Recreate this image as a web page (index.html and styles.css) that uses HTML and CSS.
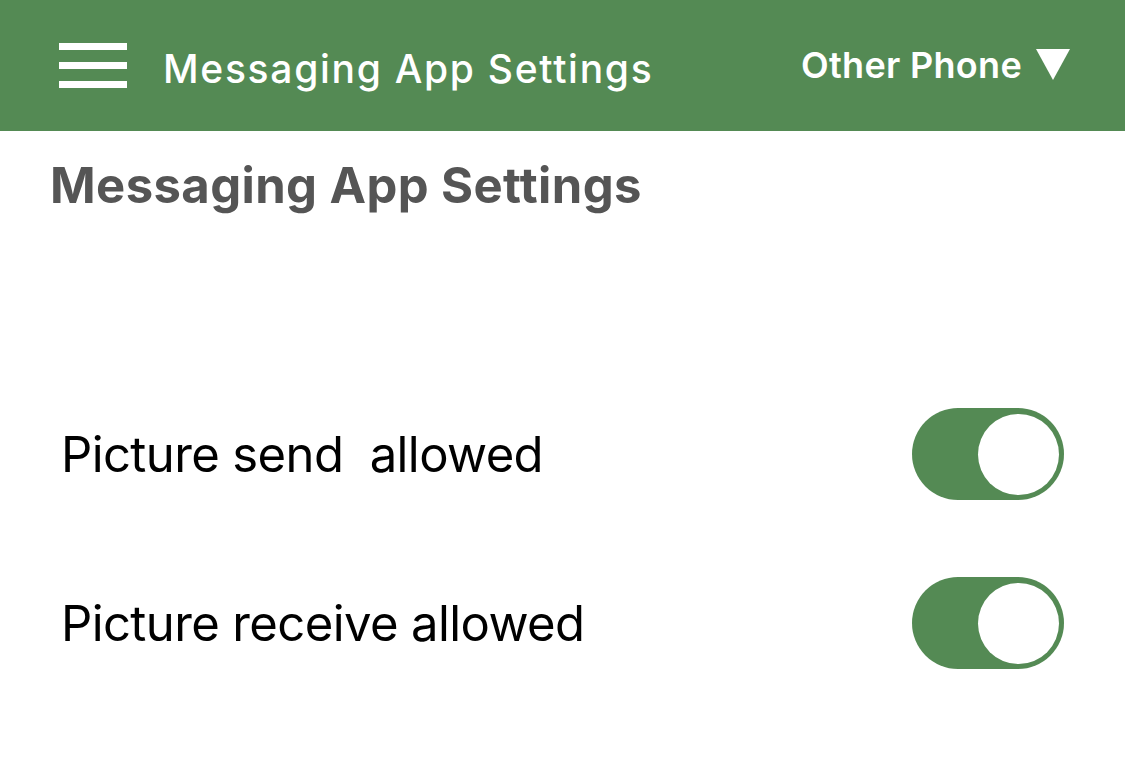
FILE: index.html
```html
<!DOCTYPE html>
<html>
<head>
<meta charset="utf-8">
<link rel="stylesheet" href="styles.css">
</head>
<body>
<header class="topbar">
  <div class="menu" aria-label="menu">
    <span class="bar"></span><span class="bar"></span><span class="bar"></span>
  </div>
  <div class="title">Messaging App Settings</div>
  <div class="picker">Other Phone <span class="tri"></span></div>
</header>
<main class="content">
  <h1 class="heading">Messaging App Settings</h1>
  <div class="list">
    <div class="row">
      <span class="label">Picture send&nbsp; allowed</span>
      <span class="toggle"><span class="knob"></span></span>
    </div>
    <div class="row">
      <span class="label">Picture receive allowed</span>
      <span class="toggle"><span class="knob"></span></span>
    </div>
  </div>
</main>
</body>
</html>
```
FILE: styles.css
```css
html, body {
  margin: 0;
  padding: 0;
  background: #ffffff;
  font-family: Inter, "Open Sans", "Liberation Sans", sans-serif;
}
.topbar {
  height: 131px;
  background: #548a54;
  display: flex;
  align-items: center;
  padding: 0 55px 0 59px;
  box-sizing: border-box;
  color: #ffffff;
}
.menu {
  width: 68px;
  display: flex;
  flex-direction: column;
  gap: 12px;
}
.bar {
  display: block;
  height: 7px;
  background: #ffffff;
}
.title {
  margin-left: 36px;
  font-size: 39px;
  font-weight: 500;
  letter-spacing: 1.7px;
  margin-top: 5px;
}
.picker {
  margin-left: auto;
  font-size: 36px;
  font-weight: 600;
  letter-spacing: 0.3px;
  display: flex;
  align-items: center;
  gap: 14px;
  margin-top: -2px;
}
.tri {
  width: 0;
  height: 0;
  border-left: 17.5px solid transparent;
  border-right: 17.5px solid transparent;
  border-top: 31px solid #ffffff;
}
.content {
  padding: 0 61px 0 50px;
}
.heading {
  margin: 25px 0 0 0;
  font-size: 49px;
  font-weight: 700;
  letter-spacing: 0.4px;
  color: #555555;
  line-height: 60px;
}
.list {
  margin-top: 192px;
  display: flex;
  flex-direction: column;
  gap: 77px;
}
.row {
  display: flex;
  align-items: center;
  justify-content: space-between;
  padding-left: 11px;
}
.label {
  font-size: 49px;
  font-weight: 400;
  letter-spacing: -0.6px;
  color: #000000;
}
.toggle {
  width: 152px;
  height: 92px;
  border-radius: 46px;
  background: #548a54;
  display: flex;
  align-items: center;
  justify-content: flex-end;
  padding: 0 5px;
  box-sizing: border-box;
}
.knob {
  width: 81px;
  height: 81px;
  border-radius: 50%;
  background: #ffffff;
}
```
